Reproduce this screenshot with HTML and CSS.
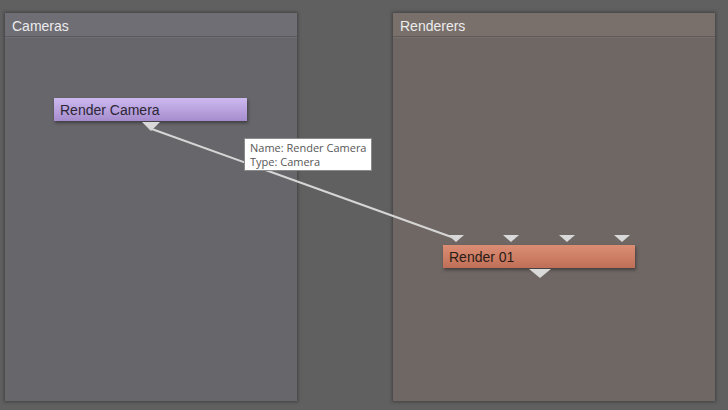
FILE: index.html
```html
<!DOCTYPE html>
<html>
<head>
<meta charset="utf-8">
<link rel="stylesheet" href="styles.css">
</head>
<body>
<div class="graph">
  <section class="panel cameras">
    <header class="panel-title">Cameras</header>
    <div class="canvas">
      <div class="node camera-node">
        <span>Render Camera</span>
        <i class="pin pin-out"></i>
      </div>
    </div>
  </section>
  <section class="panel renderers">
    <header class="panel-title">Renderers</header>
    <div class="canvas">
      <div class="node render-node">
        <i class="pin pin-in p1"></i>
        <i class="pin pin-in p2"></i>
        <i class="pin pin-in p3"></i>
        <i class="pin pin-in p4"></i>
        <span>Render 01</span>
        <i class="pin pin-out"></i>
      </div>
    </div>
  </section>

  <!-- wire from the camera output to the renderer's first input -->
  <svg class="wires" width="728" height="410" viewBox="0 0 728 410">
    <line x1="149" y1="128" x2="457" y2="239" stroke="#d6d6d6" stroke-width="2"/>
  </svg>

  <div class="tooltip">
    <div>Name: Render Camera</div>
    <div>Type: Camera</div>
  </div>
</div>
</body>
</html>
```
FILE: styles.css
```css
html, body {
  margin: 0;
  padding: 0;
  background: #606060;
  font-family: "Liberation Sans", Arial, sans-serif;
}

.graph {
  position: relative;
  width: 728px;
  height: 410px;
  box-sizing: border-box;
  padding: 13px 0 0 5px;
  display: flex;
  align-items: flex-start;
  gap: 96px;
}

.panel {
  height: 388px;
  display: flex;
  flex-direction: column;
  box-shadow: 0 0 3px 1px rgba(40, 40, 40, 0.55);
}

.cameras {
  width: 292px;
  background: #67666b;
}

.renderers {
  width: 322px;
  background: #6f6764;
}

.panel-title {
  height: 24px;
  box-sizing: border-box;
  padding: 5px 0 0 7px;
  font-size: 14px;
  color: #ececec;
  border-bottom: 1px solid #5a595e;
  box-shadow: 0 1px 0 rgba(255, 255, 255, 0.06);
}

.cameras .panel-title {
  background: #6f6e75;
}

.renderers .panel-title {
  background: #79706c;
  border-bottom-color: #625a57;
}

.canvas {
  position: relative;
  flex: 1;
}

.node {
  position: absolute;
  height: 23px;
  box-sizing: border-box;
  padding: 4px 0 0 6px;
  font-size: 14px;
  box-shadow: 1px 2px 3px rgba(30, 30, 30, 0.55);
}

.camera-node {
  left: 49px;
  top: 61px;
  width: 193px;
  color: #2c2636;
  background: linear-gradient(#cdb9ef, #a68ccd);
}

.render-node {
  left: 50px;
  top: 208px;
  width: 192px;
  color: #2a1c17;
  background: linear-gradient(#dc8e74, #bf6f57);
}

.pin {
  position: absolute;
  width: 0;
  height: 0;
  border-left: 9px solid transparent;
  border-right: 9px solid transparent;
  border-top: 9px solid #d9d9d9;
}

.camera-node .pin-out {
  left: 88px;
  top: 24px;
}

.render-node .pin-out {
  left: 86px;
  top: 24px;
  border-left-width: 11px;
  border-right-width: 11px;
  border-top-width: 9px;
}

.pin-in {
  top: -10px;
  border-left-width: 8px;
  border-right-width: 8px;
  border-top-width: 7px;
}

.p1 { left: 5px; }
.p2 { left: 60px; }
.p3 { left: 116px; }
.p4 { left: 171px; }

.wires {
  position: absolute;
  left: 0;
  top: 0;
  pointer-events: none;
}

.tooltip {
  position: absolute;
  left: 244px;
  top: 138px;
  width: 128px;
  height: 33px;
  box-sizing: border-box;
  padding: 2px 0 0 5px;
  background: #ffffff;
  border: 1px solid #8a8a8a;
  font-family: "Open Sans", "Liberation Sans", sans-serif;
  font-size: 11px;
  line-height: 14px;
  color: #575757;
}
```
